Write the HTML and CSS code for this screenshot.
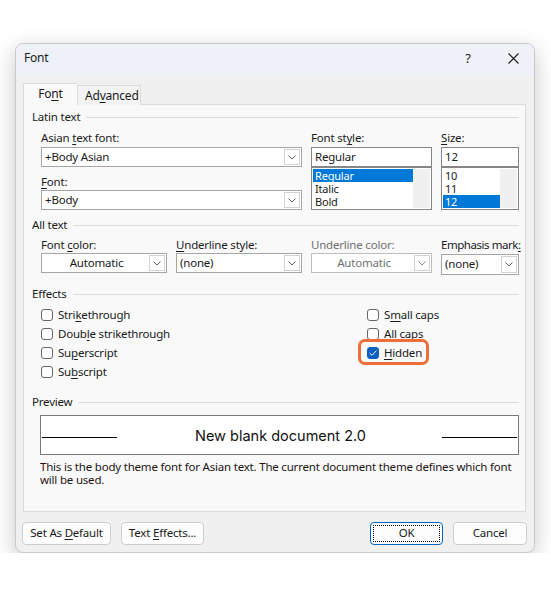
FILE: index.html
```html
<!DOCTYPE html>
<html lang="en">
<head>
    <meta charset="UTF-8">
    <meta name="viewport" content="width=device-width, initial-scale=1.0">
    <title>Font</title>
    <link rel="stylesheet" href="styles.css">
</head>
<body>
    <div class="dialog">
        <!-- Title bar -->
        <div class="titlebar">
            <span class="title">Font</span>
            <span class="help">?</span>
            <span class="close">
                <svg width="11" height="11" viewBox="0 0 11 11"><path d="M0.5 0.5 L10.5 10.5 M10.5 0.5 L0.5 10.5" stroke="#1b1b1b" stroke-width="1.1" fill="none"/></svg>
            </span>
        </div>

        <div class="content">
            <div class="tabs">
                <div class="tab active">Fo<u>n</u>t</div>
                <div class="tab">Ad<u>v</u>anced</div>
            </div>

            <div class="panel">
                <!-- Latin text -->
                <div class="group-title">Latin text</div>
                <div class="row latin">
                    <div class="col col-name">
                        <div class="label">Asian <u>t</u>ext font:</div>
                        <div class="combo first">
                            <span class="value">+Body Asian</span>
                            <span class="arrow"><svg width="8" height="5" viewBox="0 0 8 5"><path d="M0.5 0.5 L4 4 L7.5 0.5" stroke="#5f5f5f" fill="none"/></svg></span>
                        </div>
                        <div class="label second"><u>F</u>ont:</div>
                        <div class="combo">
                            <span class="value">+Body</span>
                            <span class="arrow"><svg width="8" height="5" viewBox="0 0 8 5"><path d="M0.5 0.5 L4 4 L7.5 0.5" stroke="#5f5f5f" fill="none"/></svg></span>
                        </div>
                    </div>
                    <div class="col col-style">
                        <div class="label">Font st<u>y</u>le:</div>
                        <div class="textbox">Regular</div>
                        <div class="listbox">
                            <div class="items">
                                <div class="item selected">Regular</div>
                                <div class="item">Italic</div>
                                <div class="item">Bold</div>
                            </div>
                            <div class="scroll"></div>
                        </div>
                    </div>
                    <div class="col col-size">
                        <div class="label"><u>S</u>ize:</div>
                        <div class="textbox">12</div>
                        <div class="listbox">
                            <div class="items">
                                <div class="item">10</div>
                                <div class="item">11</div>
                                <div class="item selected">12</div>
                            </div>
                            <div class="scroll"></div>
                        </div>
                    </div>
                </div>

                <!-- All text -->
                <div class="group-title spaced">All text</div>
                <div class="row alltext">
                    <div class="col col-color">
                        <div class="label">Font <u>c</u>olor:</div>
                        <div class="combo">
                            <span class="value center">Automatic</span>
                            <span class="arrow"><svg width="8" height="5" viewBox="0 0 8 5"><path d="M0.5 0.5 L4 4 L7.5 0.5" stroke="#5f5f5f" fill="none"/></svg></span>
                        </div>
                    </div>
                    <div class="col col-uline">
                        <div class="label"><u>U</u>nderline style:</div>
                        <div class="combo">
                            <span class="value">(none)</span>
                            <span class="arrow"><svg width="8" height="5" viewBox="0 0 8 5"><path d="M0.5 0.5 L4 4 L7.5 0.5" stroke="#5f5f5f" fill="none"/></svg></span>
                        </div>
                    </div>
                    <div class="col col-style">
                        <div class="label disabled">Underline color:</div>
                        <div class="combo disabled">
                            <span class="value center">Automatic</span>
                            <span class="arrow"><svg width="8" height="5" viewBox="0 0 8 5"><path d="M0.5 0.5 L4 4 L7.5 0.5" stroke="#8a8a8a" fill="none"/></svg></span>
                        </div>
                    </div>
                    <div class="col col-size">
                        <div class="label tight">Emphasis mark<u>:</u></div>
                        <div class="combo emphasis">
                            <span class="value">(none)</span>
                            <span class="arrow"><svg width="8" height="5" viewBox="0 0 8 5"><path d="M0.5 0.5 L4 4 L7.5 0.5" stroke="#5f5f5f" fill="none"/></svg></span>
                        </div>
                    </div>
                </div>

                <!-- Effects -->
                <div class="group-title effects-title">Effects</div>
                <div class="row effects">
                    <div class="checks left">
                        <div class="check"><span class="box"></span><span class="text">Stri<u>k</u>ethrough</span></div>
                        <div class="check"><span class="box"></span><span class="text">Doub<u>l</u>e strikethrough</span></div>
                        <div class="check"><span class="box"></span><span class="text">Su<u>p</u>erscript</span></div>
                        <div class="check"><span class="box"></span><span class="text">Su<u>b</u>script</span></div>
                    </div>
                    <div class="checks right">
                        <div class="check"><span class="box"></span><span class="text">S<u>m</u>all caps</span></div>
                        <div class="check"><span class="box"></span><span class="text"><u>A</u>ll caps</span></div>
                        <div class="check highlighted">
                            <span class="box checked">
                                <svg width="8" height="6" viewBox="0 0 8 6"><path d="M0.5 3 L3 5.3 L7.5 0.6" stroke="#fff" stroke-width="1" fill="none"/></svg>
                            </span>
                            <span class="text"><u>H</u>idden</span>
                        </div>
                    </div>
                </div>

                <!-- Preview -->
                <div class="group-title preview-title">Preview</div>
                <div class="preview">
                    <span class="rule"></span>
                    <span class="sample">New blank document 2.0</span>
                    <span class="rule"></span>
                </div>
                <p class="description">This is the body theme font for Asian text. The current document theme defines which font will be used.</p>
            </div>

            <!-- Buttons -->
            <div class="buttons">
                <button class="btn btn-default">Set As <u>D</u>efault</button>
                <button class="btn btn-effects">Text <u>E</u>ffects...</button>
                <span class="spacer"></span>
                <button class="btn btn-ok">OK</button>
                <button class="btn btn-cancel">Cancel</button>
            </div>
        </div>
    </div>
</body>
</html>
```

FILE: styles.css
```css
body {
    margin: 0;
    padding: 0;
    background-color: #fff;
    font-family: "Noto Sans", "Open Sans", sans-serif;
    font-size: 11.5px;
    letter-spacing: -0.2px;
    color: #1a1a1a;
}
u {
    text-decoration-thickness: 1px;
    text-underline-offset: 2px;
}
.dialog {
    box-sizing: border-box;
    width: 520px;
    height: 510px;
    margin: 43px 0 0 15px;
    background: #f0f0f0;
    border: 1px solid #c9c9c9;
    border-radius: 8px;
    box-shadow: 0 6px 22px rgba(0,0,0,0.22);
    display: flex;
    flex-direction: column;
    overflow: hidden;
}
.titlebar {
    box-sizing: border-box;
    height: 32px;
    background: #eef1f8;
    display: flex;
    align-items: center;
    padding: 0 0 5px 8px;
    font-size: 12px;
}
.title {
    flex: 1;
}
.help {
    width: 20px;
    text-align: center;
    font-size: 13px;
    margin-right: 25px;
}
.close {
    width: 20px;
    display: flex;
    justify-content: center;
    margin-right: 11px;
    padding-top: 1px;
}
.content {
    padding: 7px 8px 0 7px;
}
.tabs {
    display: flex;
    align-items: flex-end;
    height: 22px;
    margin-bottom: -1px;
    position: relative;
}
.tab {
    box-sizing: border-box;
    height: 20px;
    border: 1px solid #dadada;
    border-bottom: none;
    background: #f3f3f3;
    padding: 0 7px;
    line-height: 19px;
    font-size: 12px;
}
.tab.active {
    height: 22px;
    width: 54px;
    text-align: center;
    background: #f9f9f9;
    line-height: 20px;
    border-right: none;
}
.tab:not(.active) {
    width: 64px;
}
.panel {
    box-sizing: border-box;
    height: 408px;
    background: #f9f9f9;
    border: 1px solid #dadada;
    padding: 4px 6px 0 8px;
}
.group-title {
    display: flex;
    align-items: center;
    gap: 6px;
    line-height: 16px;
}
.group-title::after {
    content: "";
    flex: 1;
    border-top: 1px solid #dcdcdc;
}
.group-title.spaced {
    margin-top: 7px;
}
.effects-title {
    margin-top: 11px;
}
.preview-title {
    margin-top: 13px;
}
.row {
    display: flex;
    margin-left: 9px;
}
.latin {
    margin-top: 5px;
}
.alltext {
    margin-top: 4px;
}
.label {
    line-height: 16px;
    white-space: nowrap;
}
.label.tight {
    letter-spacing: -0.45px;
}
.label.second {
    margin-top: 7px;
}
.label.disabled {
    color: #707070;
}
.col-name {
    width: 261px;
    margin-right: 9px;
}
.col-style {
    width: 121px;
    margin-right: 9px;
}
.col-size {
    width: 78px;
}
.col-color {
    width: 126px;
    margin-right: 9px;
}
.col-uline {
    width: 126px;
    margin-right: 9px;
}
.combo {
    box-sizing: border-box;
    height: 20px;
    display: flex;
    background: #fff;
    border: 1px solid #a6a6a6;
}
.combo.first {
    margin-top: 1px;
}
.combo.emphasis {
    height: 21px;
    margin-top: 1px;
}
.combo.disabled {
    border-color: #bdbdbd;
    color: #707070;
}
.combo .value {
    flex: 1;
    padding-left: 3px;
    line-height: 18px;
    white-space: nowrap;
}
.combo .value.center {
    text-align: center;
}
.arrow {
    box-sizing: border-box;
    width: 16px;
    margin: 1px;
    border: 1px solid #d2d2d2;
    display: flex;
    align-items: center;
    justify-content: center;
}
.textbox {
    box-sizing: border-box;
    height: 20px;
    margin-top: 1px;
    background: #fff;
    border: 1px solid #868686;
    padding-left: 3px;
    line-height: 18px;
}
.listbox {
    box-sizing: border-box;
    height: 43px;
    background: #fff;
    border: 1px solid #868686;
    padding: 1px;
    display: flex;
}
.items {
    flex: 1;
}
.item {
    height: 13px;
    line-height: 13px;
    font-size: 11px;
    padding-left: 2px;
}
.item.selected {
    background: #0078d7;
    color: #fff;
}
.scroll {
    width: 17px;
    background: #f0f0f0;
}
.effects {
    margin-top: 3px;
}
.checks.left {
    width: 326px;
}
.check {
    height: 19px;
    display: flex;
    align-items: center;
    gap: 5px;
    white-space: nowrap;
    position: relative;
}
.box {
    box-sizing: border-box;
    width: 12px;
    height: 12px;
    border: 1px solid #666;
    border-radius: 3px;
    background: #fff;
    display: flex;
    align-items: center;
    justify-content: center;
}
.box.checked {
    background: #0a5fc0;
    border-color: #0a5fc0;
}
/* orange annotation round the Hidden option */
.check.highlighted::after {
    content: "";
    position: absolute;
    left: -9px;
    top: -4px;
    width: 65px;
    height: 20px;
    border: 3px solid #ee6e3a;
    border-radius: 7px;
}
.preview {
    box-sizing: border-box;
    height: 40px;
    margin: 5px 0 0 8px;
    background: #fff;
    border: 1px solid #7a7a7a;
    display: flex;
    align-items: center;
    justify-content: space-between;
    padding: 0 1px 0 1px;
}
.rule {
    width: 75px;
    height: 8px;
    border-bottom: 1px solid #000;
    margin-top: -4px;
}
.sample {
    font-family: Inter, "Liberation Sans", sans-serif;
    font-size: 14.5px;
    letter-spacing: 0;
    color: #111;
    padding-left: 2px;
}
.description {
    margin: 5px 0 0 8px;
    width: 478px;
    line-height: 13px;
    color: #1e1414;
}
.buttons {
    display: flex;
    margin-top: 10px;
    margin-left: -1px;
    gap: 10px;
}
.spacer {
    flex: 1;
}
.btn {
    box-sizing: border-box;
    height: 23px;
    font-family: inherit;
    font-size: 11.5px;
    letter-spacing: -0.2px;
    color: #1a1a1a;
    background: #fdfdfd;
    border: 1px solid #cacdd2;
    border-radius: 4px;
    padding: 0 0 2px 0;
}
.btn-default {
    width: 89px;
}
.btn-effects {
    width: 83px;
}
.btn-ok {
    width: 73px;
    border-color: #0067c0;
    outline: 1px dotted #000;
    outline-offset: -4px;
}
.btn-cancel {
    width: 74px;
    margin-right: -1px;
}
```
